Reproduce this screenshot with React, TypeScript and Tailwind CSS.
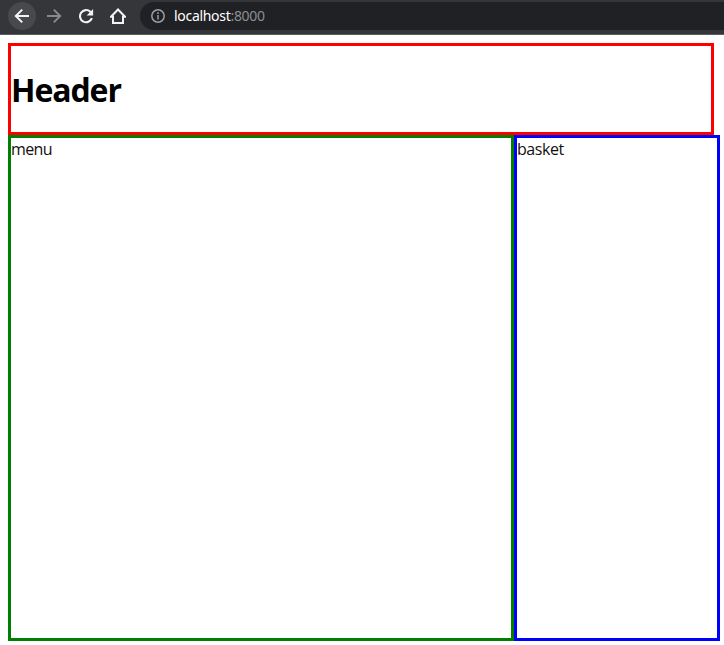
function BrowserBar() {
  return (
    <div className="flex h-[35px] items-start border-b border-[#5b5c60] bg-[#35363a] font-['Noto_Sans',sans-serif]">
      <div className="ml-2 mt-0.5 flex h-7 w-7 items-center justify-center rounded-full bg-[#48494d]">
        <svg width="16" height="16" viewBox="0 0 16 16" fill="none" stroke="#f1f3f4" strokeWidth="2">
          <path d="M15 8H2.2M8.2 1.6L1.8 8l6.4 6.4" />
        </svg>
      </div>
      <svg className="ml-2.5 mt-2" width="16" height="16" viewBox="0 0 16 16" fill="none" stroke="#88898c" strokeWidth="2">
        <path d="M1 8h12.8M7.8 1.6L14.2 8l-6.4 6.4" />
      </svg>
      <svg className="ml-4 mt-2" width="16" height="16" viewBox="0 0 16 16" fill="none" stroke="#f1f3f4" strokeWidth="2.1">
        <path d="M13.9 10.2A6.1 6.1 0 1 1 12.3 3.7L14 5.4" />
        <path d="M15.1 0.9v6.5H8.6z" fill="#f1f3f4" stroke="none" />
      </svg>
      <svg className="ml-4 mt-2" width="16" height="16" viewBox="0 0 16 16" fill="none" stroke="#f1f3f4" strokeWidth="2">
        <path d="M3 15V8.8H0.9L8 1.5l7.1 7.3H13V15z" />
      </svg>
      <div className="ml-3.5 mt-0.5 flex h-7 flex-1 items-center rounded-l-full bg-[#202124] pl-[11px]">
        <svg width="14" height="14" viewBox="0 0 14 14" fill="none" stroke="#9aa0a6" strokeWidth="1.5">
          <circle cx="7" cy="7" r="6.2" />
          <path d="M7 6v4.5M7 3.3v1.6" />
        </svg>
        <span className="ml-[9px] text-[14px] leading-5 tracking-[-0.3px] text-white">
          localhost<span className="text-[#8b8e92]">:8000</span>
        </span>
      </div>
    </div>
  );
}

export default function App() {
  return (
    <div className="h-[645px] w-[724px] overflow-hidden bg-white text-black">
      <BrowserBar />
      <div className="pl-2 pt-2 font-['Open_Sans','Noto_Sans',sans-serif]">
        <header className="flex h-[92px] w-[706px] items-center border-[3px] border-[#ff0000]">
          <h1 className="text-[32px] font-bold leading-[43px] tracking-[-1.1px]">Header</h1>
        </header>
        <div className="flex h-[506px]">
          <main className="w-[506px] border-[3px] border-[#008000] text-[16px] leading-[23px] tracking-[-0.6px] text-[#111111]">menu</main>
          <aside className="w-[206px] border-[3px] border-[#0000ff] text-[16px] leading-[23px] tracking-[-0.45px] text-[#111111]">basket</aside>
        </div>
      </div>
    </div>
  );
}
